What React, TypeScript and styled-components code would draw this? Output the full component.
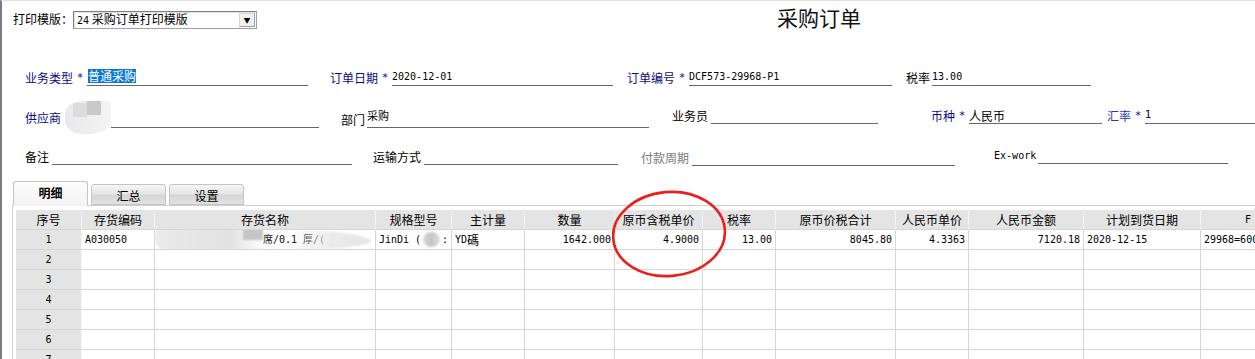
import React from 'react';
import styled, { createGlobalStyle } from 'styled-components';

const CJK = `"Noto Sans CJK SC", "Noto Sans", sans-serif`;
const MONO = `"DejaVu Sans Mono", "Noto Sans CJK SC", monospace`;

const GlobalStyle = createGlobalStyle`
  html, body {
    margin: 0;
    padding: 0;
    background: #fff;
    overflow: hidden;
  }
  body {
    font-family: ${CJK};
    font-size: 12px;
    color: #000;
  }
`;

const Window = styled.div`
  position: relative;
  width: 1255px;
  height: 359px;
  box-sizing: border-box;
  border-left: 2px solid #7c7c7c;
  border-top: 1px solid #e2e2e2;
  overflow: hidden;
`;

const TopBar = styled.div`
  display: flex;
  align-items: flex-start;
  height: 45px;
`;

const PrintLabel = styled.span`
  margin: 11px 0 0 11px;
  width: 60px;
  line-height: 14px;
`;

const Select = styled.div`
  display: flex;
  align-items: center;
  margin-top: 10px;
  width: 184px;
  height: 18px;
  box-sizing: border-box;
  border: 1px solid #a0a0a0;
  border-top-color: #808080;
  border-left-color: #808080;
  box-shadow: inset 1px 1px 0 #e0e0e0;
  background: #fff;
`;

const SelectText = styled.span`
  flex: 1;
  padding-left: 3px;
  line-height: 14px;
  white-space: nowrap;
`;

const Num = styled.span`
  font-family: ${MONO};
  font-size: 10px;
`;

const ArrowBtn = styled.span`
  width: 16px;
  height: 14px;
  margin-right: 1px;
  box-sizing: border-box;
  border: 1px solid #d8d8d8;
  border-right-color: #a0a0a0;
  border-bottom-color: #a0a0a0;
  background: #f0f0f0;
  display: flex;
  align-items: center;
  justify-content: center;
  font-size: 7px;
  line-height: 1;
`;

const Title = styled.h1`
  margin: 3px 0 0 520px;
  font-size: 21px;
  font-weight: normal;
  line-height: 26px;
  color: #111;
  white-space: nowrap;
`;

const FormRow = styled.div<{ $h: number }>`
  display: flex;
  align-items: flex-end;
  height: ${(p) => p.$h}px;
  white-space: nowrap;
`;

const Field = styled.div<{ $ml: number; $lift?: number }>`
  display: flex;
  align-items: flex-end;
  margin-left: ${(p) => p.$ml}px;
  margin-bottom: ${(p) => p.$lift || 0}px;
`;

const Label = styled.span<{ $tone?: 'navy' | 'blue' | 'gray' | 'black'; $gap?: number }>`
  line-height: 14px;
  margin-bottom: 1px;
  margin-right: ${(p) => p.$gap || 0}px;
  color: ${(p) =>
    p.$tone === 'navy' ? '#0b0b86' : p.$tone === 'blue' ? '#2336b8' : p.$tone === 'gray' ? '#7a7a7a' : '#000'};
`;

const Star = styled.span`
  width: 14px;
  text-align: center;
  font-family: ${MONO};
  font-size: 11px;
  line-height: 12px;
  margin-bottom: 2px;
  color: #0b0b86;
`;

const Line = styled.div<{ $w: number }>`
  width: ${(p) => p.$w}px;
  height: 15px;
  border-bottom: 1px solid #666;
  display: flex;
  align-items: flex-end;
`;

const LineValue = styled.span`
  font-family: ${MONO};
  font-size: 10px;
  line-height: 12px;
  padding-bottom: 2px;
`;

const LineCjk = styled.span<{ $small?: boolean }>`
  font-size: ${(p) => (p.$small ? 11 : 12)}px;
  line-height: 14px;
  align-self: ${(p) => (p.$small ? 'flex-start' : 'flex-end')};
  margin-top: ${(p) => (p.$small ? -4 : 0)}px;
`;

const Selected = styled.span`
  background: #0a78d4;
  color: #fff;
  line-height: 14px;
  margin-bottom: 2px;
  margin-left: 1px;
`;

const Redact = styled.div`
  width: 50px;
  height: 33px;
  margin-left: 4px;
  margin-bottom: -6px;
  border-radius: 40% 10% 45% 40%;
  background:
    linear-gradient(#c9c9c9, #c9c9c9) 22px 0 / 14px 14px no-repeat,
    linear-gradient(#dcdcdc, #dcdcdc) 8px 2px / 14px 14px no-repeat,
    linear-gradient(90deg, #e9e9ee, #efefef 60%, #f4f4f4);
  filter: blur(0.6px);
`;

const TabBar = styled.div`
  display: flex;
  align-items: flex-end;
  height: 24px;
  margin-top: 15px;
  padding-left: 11px;
`;

const Tab = styled.div<{ $active?: boolean }>`
  width: 75px;
  height: ${(p) => (p.$active ? 25 : 21)}px;
  margin-left: ${(p) => (p.$active ? 0 : 3)}px;
  margin-bottom: ${(p) => (p.$active ? -1 : 0)}px;
  box-sizing: border-box;
  border: 1px solid #c4c4c4;
  border-bottom: ${(p) => (p.$active ? 'none' : '1px solid #c4c4c4')};
  border-radius: 3px 3px 0 0;
  background: ${(p) =>
    p.$active
      ? 'linear-gradient(#fcfcfc, #f2f2f2)'
      : 'linear-gradient(#f6f6f6 0%, #e6e6e6 45%, #d6d6d6 55%, #e2e2e2 100%)'};
  font-weight: ${(p) => (p.$active ? 'bold' : 'normal')};
  display: flex;
  justify-content: center;
  align-items: ${(p) => (p.$active ? 'flex-start' : 'center')};
  padding-top: ${(p) => (p.$active ? 4 : 2)}px;
  line-height: 14px;
  position: relative;
  z-index: 1;
`;

const Panel = styled.div`
  margin-left: 10px;
  border-top: 1px solid #cfcfcf;
  border-left: 1px solid #d4d4d4;
  padding: 4px 0 0 3px;
  height: 160px;
  overflow: hidden;
`;

const COLS = [66, 73, 221, 76, 73, 90, 88, 73, 120, 73, 115, 117, 95];

const Grid = styled.div`
  display: grid;
  grid-template-columns: ${COLS.map((c) => `${c}px`).join(' ')};
  grid-auto-rows: 20px;
  width: max-content;
`;

const Cell = styled.div<{ $head?: boolean; $align?: 'left' | 'right' | 'center' }>`
  position: relative;
  box-sizing: border-box;
  border-right: 1px solid ${(p) => (p.$head ? '#f4f4f4' : '#d6d6d6')};
  border-bottom: 1px solid #d6d6d6;
  background: ${(p) => (p.$head ? '#e4e4e4' : '#fff')};
  display: flex;
  align-items: center;
  justify-content: ${(p) =>
    p.$align === 'right' ? 'flex-end' : p.$align === 'left' ? 'flex-start' : 'center'};
  padding: 0 3px 0 3px;
  white-space: nowrap;
  overflow: hidden;
  line-height: 14px;
`;

const CellNum = styled.span`
  font-family: ${MONO};
  font-size: 10px;
`;

const NameSmear = styled.div`
  position: absolute;
  left: 0;
  top: -2px;
  width: 216px;
  height: 22px;
  border-radius: 8px 60% 40% 10px;
  background:
    linear-gradient(#c6c6c6, #c6c6c6) 88px 0 / 20px 12px no-repeat,
    linear-gradient(90deg, #eaeaea 0%, #e2e2e2 35%, rgba(230,230,230,0.2) 48%, rgba(255,255,255,0) 62%, rgba(232,232,232,0.9) 82%, #e6e6e6 100%);
  filter: blur(1px);
`;

const SpecSmear = styled.span`
  display: inline-block;
  width: 26px;
  height: 15px;
  margin: 0 2px;
  border-radius: 50%;
  background: linear-gradient(90deg, #d8d8d8, #c4c4c4 50%, #dedede);
  filter: blur(0.8px);
  vertical-align: middle;
`;

const Circle = styled.svg`
  position: absolute;
  left: 607px;
  top: 188px;
  width: 120px;
  height: 90px;
  pointer-events: none;
  overflow: visible;
`;

const headers = [
  '序号', '存货编码', '存货名称', '规格型号', '主计量', '数量', '原币含税单价', '税率',
  '原币价税合计', '人民币单价', '人民币金额', '计划到货日期', 'F',
];

const App = () => {
  const emptyRows = [2, 3, 4, 5, 6, 7];

  return (
    <>
      <GlobalStyle />
      <Window>
        <TopBar>
          <PrintLabel>打印模版：</PrintLabel>
          <Select>
            <SelectText>
              <Num>24</Num> 采购订单打印模版
            </SelectText>
            <ArrowBtn>▼</ArrowBtn>
          </Select>
          <Title>采购订单</Title>
        </TopBar>

        <FormRow $h={40}>
          <Field $ml={23}>
            <Label $tone="navy">业务类型</Label>
            <Star>*</Star>
            <Line $w={221}>
              <Selected>普通采购</Selected>
            </Line>
          </Field>
          <Field $ml={22}>
            <Label $tone="navy">订单日期</Label>
            <Star>*</Star>
            <Line $w={221}>
              <LineValue>2020-12-01</LineValue>
            </Line>
          </Field>
          <Field $ml={14}>
            <Label $tone="navy">订单编号</Label>
            <Star>*</Star>
            <Line $w={203}>
              <LineValue>DCF573-29968-P1</LineValue>
            </Line>
          </Field>
          <Field $ml={14}>
            <Label $gap={2}>税率</Label>
            <Line $w={159}>
              <LineValue>13.00</LineValue>
            </Line>
          </Field>
        </FormRow>

        <FormRow $h={42}>
          <Field $ml={23} $lift={2}>
            <Label $tone="navy">供应商</Label>
          </Field>
          <Redact />
          <Field $ml={0}>
            <Line $w={208} />
          </Field>
          <Field $ml={22}>
            <Label $gap={2}>部门</Label>
            <Line $w={282}>
              <LineCjk $small>采购</LineCjk>
            </Line>
          </Field>
          <Field $ml={23} $lift={4}>
            <Label $gap={3}>业务员</Label>
            <Line $w={167} />
          </Field>
          <Field $ml={53} $lift={4}>
            <Label $tone="navy">币种</Label>
            <Star>*</Star>
            <Line $w={133}>
              <LineCjk>人民币</LineCjk>
            </Line>
          </Field>
          <Field $ml={5} $lift={4}>
            <Label $tone="blue">汇率</Label>
            <Star>*</Star>
            <Line $w={110}>
              <LineValue>1</LineValue>
            </Line>
          </Field>
        </FormRow>

        <FormRow $h={38}>
          <Field $ml={23} $lift={1}>
            <Label $gap={3}>备注</Label>
            <Line $w={300} />
          </Field>
          <Field $ml={21} $lift={1}>
            <Label $gap={3}>运输方式</Label>
            <Line $w={194} />
          </Field>
          <Field $ml={23}>
            <Label $tone="gray" $gap={3}>付款周期</Label>
            <Line $w={263} />
          </Field>
          <Field $ml={39} $lift={2}>
            <LineValue style={{ marginRight: 2 }}>Ex-work</LineValue>
            <Line $w={190} />
          </Field>
        </FormRow>

        <TabBar>
          <Tab $active>明细</Tab>
          <Tab>汇总</Tab>
          <Tab>设置</Tab>
        </TabBar>

        <Panel>
          <Grid>
            {headers.map((h) => (
              <Cell key={h} $head>
                {h === 'F' ? <CellNum>F</CellNum> : h}
              </Cell>
            ))}

            <Cell $head>
              <CellNum>1</CellNum>
            </Cell>
            <Cell $align="left">
              <CellNum>A030050</CellNum>
            </Cell>
            <Cell $align="left" style={{ paddingLeft: 108 }}>
              <NameSmear />
              <CellNum>席/0.1 厚/(</CellNum>
            </Cell>
            <Cell $align="left">
              <CellNum>JinDi (</CellNum>
              <SpecSmear />
              <CellNum>:</CellNum>
            </Cell>
            <Cell $align="left">
              <CellNum>YD</CellNum>碼
            </Cell>
            <Cell $align="right">
              <CellNum>1642.000</CellNum>
            </Cell>
            <Cell $align="right">
              <CellNum>4.9000</CellNum>
            </Cell>
            <Cell $align="right">
              <CellNum>13.00</CellNum>
            </Cell>
            <Cell $align="right">
              <CellNum>8045.80</CellNum>
            </Cell>
            <Cell $align="right">
              <CellNum>4.3363</CellNum>
            </Cell>
            <Cell $align="right">
              <CellNum>7120.18</CellNum>
            </Cell>
            <Cell $align="left">
              <CellNum>2020-12-15</CellNum>
            </Cell>
            <Cell $align="left">
              <CellNum>29968=600</CellNum>
            </Cell>

            {emptyRows.map((n) => (
              <React.Fragment key={n}>
                <Cell $head>
                  <CellNum>{n}</CellNum>
                </Cell>
                {COLS.slice(1).map((_, i) => (
                  <Cell key={i} />
                ))}
              </React.Fragment>
            ))}
          </Grid>
        </Panel>

        <Circle viewBox="0 0 120 90">
          <ellipse
            cx="60"
            cy="45"
            rx="56"
            ry="42"
            fill="none"
            stroke="#e8211c"
            strokeWidth="2.6"
            transform="rotate(-5 60 45)"
          />
        </Circle>
      </Window>
    </>
  );
};

export default App;
